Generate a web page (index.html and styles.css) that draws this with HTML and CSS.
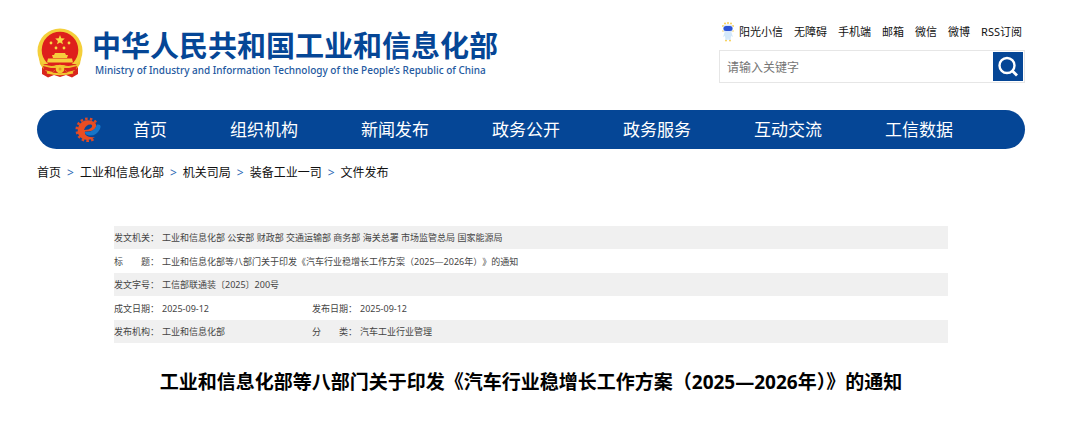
FILE: index.html
```html
<!DOCTYPE html>
<html lang="zh-CN">
<head>
<meta charset="utf-8">
<meta name="viewport" content="width=device-width, initial-scale=1">
<title>工业和信息化部</title>
<link rel="stylesheet" href="styles.css">
</head>
<body>
<div class="page">
  <header class="header">
    <div class="brand">
      <svg class="emblem" viewBox="0 0 46 50" aria-hidden="true">
        <circle cx="23" cy="23" r="22.500" fill="#f4cf3a"/>
        <path d="M5 36 L5 46 L11 49.500 L17 47 L23 49 L29 47 L35 49.500 L41 46 L41 36Z" fill="#d9251c"/>
        <path d="M2 30 Q7 40 18 42 L14 46 Q6 42 3 36Z M44 30 Q39 40 28 42 L32 46 Q40 42 43 36Z" fill="#f2c632"/>
        <circle cx="23" cy="22" r="18.300" fill="#de1f1c"/>
        <path d="M23 7l1.300 3.300 3.500.3-2.700 2.300.9 3.400-3-1.800-3 1.800.9-3.400-2.700-2.300 3.500-.3z" fill="#f8da43"/>
        <g fill="#f8da43"><circle cx="14" cy="15" r="1.400"/><circle cx="32" cy="15" r="1.400"/><circle cx="19" cy="20" r="1.400"/><circle cx="27" cy="20" r="1.400"/></g>
        <path d="M18 25h10l1 2h2l-1 3H16l-1-3h2zM11 30.500h24l1 4H10z" fill="#f6cf3d"/>
        <path d="M7 36.500 Q15 39 19 37 H27 Q31 39 39 36.500 L36 40 H10Z" fill="#f1bf30"/>
        <path d="M6 38 L18 41 L16 44 L7 42Z M40 38 L28 41 L30 44 L39 42Z" fill="#d9251c"/>
        <path d="M10 44.500 Q23 48 36 44.500" fill="none" stroke="#f2c632" stroke-width="2"/>
        <circle cx="23" cy="41" r="4.300" fill="#f4c832"/><circle cx="23" cy="41" r="1.500" fill="#e78f24"/>
      </svg>
      <div class="brand-text">
        <div class="brand-cn">中华人民共和国工业和信息化部</div>
        <div class="brand-en">Ministry of Industry and Information Technology of the People’s Republic of China</div>
      </div>
    </div>
    <div class="tools">
      <div class="links">
        <a class="mascot-link" href="#"><svg class="mascot" viewBox="0 0 12 20" aria-hidden="true">
          <g fill="#f6cf55"><circle cx="3" cy="1.500" r="1"/><circle cx="6" cy="1" r="1"/><circle cx="9" cy="1.500" r="1"/><circle cx="1" cy="4" r="1"/><circle cx="11" cy="4" r="1"/><circle cx="1" cy="9" r=".8"/><circle cx="11" cy="9" r=".8"/><circle cx="4" cy="18.500" r="1"/><circle cx="8" cy="18.500" r="1"/></g>
          <path d="M3 9h6l2 6-2-1-.5 4H6.500L6 16l-.5 2h-2L3 14l-2 1z" fill="#d4e9fa"/>
          <rect x="1" y="2.500" width="10" height="8" rx="4" fill="#d8e6fc"/><rect x="1.500" y="4" width="9" height="5" rx="2.500" fill="#2c53d5"/>
        </svg>阳光小信</a>
        <a href="#">无障碍</a><a href="#">手机端</a><a href="#">邮箱</a><a href="#">微信</a><a href="#">微博</a><a href="#">RSS订阅</a>
      </div>
      <form class="search">
        <input class="search-input" type="text" placeholder="请输入关键字" aria-label="请输入关键字">
        <button class="search-button" type="button" aria-label="搜索"><svg viewBox="0 0 30 29" aria-hidden="true"><circle cx="14" cy="13.500" r="7.500" fill="none" stroke="#fff" stroke-width="2.400"/><path d="M19 18.500l5 5" stroke="#fff" stroke-width="2.800"/></svg></button>
      </form>
    </div>
  </header>
  <nav class="nav">
    <svg class="nav-logo" viewBox="0 0 26 26" aria-hidden="true">
      <path d="M21 5.500 A11 11 0 1 0 20 21" fill="none" stroke="#df4a25" stroke-width="2.600" stroke-dasharray="2.500 2.200"/>
      <path d="M18 4.500 Q9 1 4 8 Q0 17 7 21.500 Q14 25 20 20 Q13 21 10 17 L10 14.500 Q19 15 21 10 Q22 6 18 4.500Z" fill="#e94d22"/>
      <path d="M9 13 Q11 7 16 7.500 Q18 8.500 16.500 10.500 Q14 13 9 13Z" fill="#054696"/>
      <path d="M9.500 15 Q19 16 22 7.500 Q27 7 25 12 Q21 19.500 14 18.500 Q10.500 18 9.500 15Z" fill="#1675c8"/>
    </svg>
    <div class="nav-items"><a href="#">首页</a><a href="#">组织机构</a><a href="#">新闻发布</a><a href="#">政务公开</a><a href="#">政务服务</a><a href="#">互动交流</a><a href="#">工信数据</a></div>
  </nav>
  <div class="crumbs"><a href="#">首页</a><span>&gt;</span><a href="#">工业和信息化部</a><span>&gt;</span><a href="#">机关司局</a><span>&gt;</span><a href="#">装备工业一司</a><span>&gt;</span><a href="#">文件发布</a></div>
  <main class="article">
    <table class="meta">
      <colgroup><col class="col-label"><col class="col-value"><col class="col-label"><col></colgroup>
      <tr><th scope="row">发文机关：</th><td colspan="3">工业和信息化部 公安部 财政部 交通运输部 商务部 海关总署 市场监管总局 国家能源局</td></tr>
      <tr><th scope="row">标　　题：</th><td colspan="3">工业和信息化部等八部门关于印发《汽车行业稳增长工作方案（2025—2026年）》的通知</td></tr>
      <tr><th scope="row">发文字号：</th><td colspan="3">工信部联通装〔2025〕200号</td></tr>
      <tr><th scope="row">成文日期：</th><td>2025-09-12</td><th scope="row">发布日期：</th><td>2025-09-12</td></tr>
      <tr><th scope="row">发布机构：</th><td>工业和信息化部</td><th scope="row">分　　类：</th><td>汽车工业行业管理</td></tr>
    </table>
    <h1 class="title">工业和信息化部等八部门关于印发《汽车行业稳增长工作方案（2025—2026年）》的通知</h1>
  </main>
</div>
</body>
</html>
```
FILE: styles.css
```css
* { box-sizing: border-box; }
body {
  margin: 0;
  background: #fff;
  color: #111;
  font-family: "Noto Sans", "Noto Sans CJK SC", sans-serif;
  font-size: 12px;
}
a { color: inherit; text-decoration: none; }
.page { padding: 22px 55px 32px 37px; }
.header { display: flex; justify-content: space-between; align-items: flex-start; height: 88px; }
.brand { display: flex; gap: 9px; padding-top: 6px; color: #054696; }
.emblem { width: 46px; height: 50px; }
.brand-text { padding-top: 1px; white-space: nowrap; }
.brand-cn { font-size: 29px; line-height: 34px; font-weight: 700; }
.brand-en { padding-left: 3px; color: #24599f; font-size: 10px; line-height: 14px; font-weight: 500; }
.tools { width: 306px; }
.links { display: flex; justify-content: flex-end; gap: 11px; padding-right: 3px; font-size: 11px; line-height: 20px; white-space: nowrap; }
.mascot-link { display: flex; gap: 5px; }
.mascot { width: 12px; height: 20px; }
.search { display: flex; height: 33px; margin-top: 8px; padding: 1px; border: 1px solid #e6e6e6; }
.search-input { flex: 1; min-width: 0; padding: 2px 6px 0; border: 0; outline: 0; background: none; font: inherit; }
.search-input::placeholder { color: #757575; }
.search-button { width: 30px; height: 29px; padding: 0; border: 0; background: #054696; }
.search-button svg { display: block; width: 30px; height: 29px; }
.nav { display: flex; align-items: center; height: 39px; padding-left: 38px; border-radius: 20px; background: #054696; color: #fff; }
.nav-logo { width: 26px; height: 26px; margin-right: 32px; }
.nav-items { display: flex; gap: 63px; font-size: 17px; line-height: 39px; white-space: nowrap; }
.crumbs { display: flex; gap: 6px; margin-top: 14px; line-height: 20px; }
.crumbs span { color: #2a68b4; }
.article { padding: 43px 77px 0; }
.meta { width: 100%; border-collapse: collapse; table-layout: fixed; color: #444; font-size: 9px; line-height: 23px; text-spacing-trim: space-all; }
.col-label { width: 48px; }
.col-value { width: 150px; }
.meta th, .meta td { height: 24px; padding: 0; font-weight: 400; text-align: left; white-space: nowrap; }
.meta tr:nth-child(odd) { background: #f0f0f0; }
.meta tr:nth-child(odd) > * { height: 23px; }
.title { margin: 25px 0 0; color: #000; font-size: 19px; line-height: 28px; font-weight: 700; text-align: center; white-space: nowrap; }
```
